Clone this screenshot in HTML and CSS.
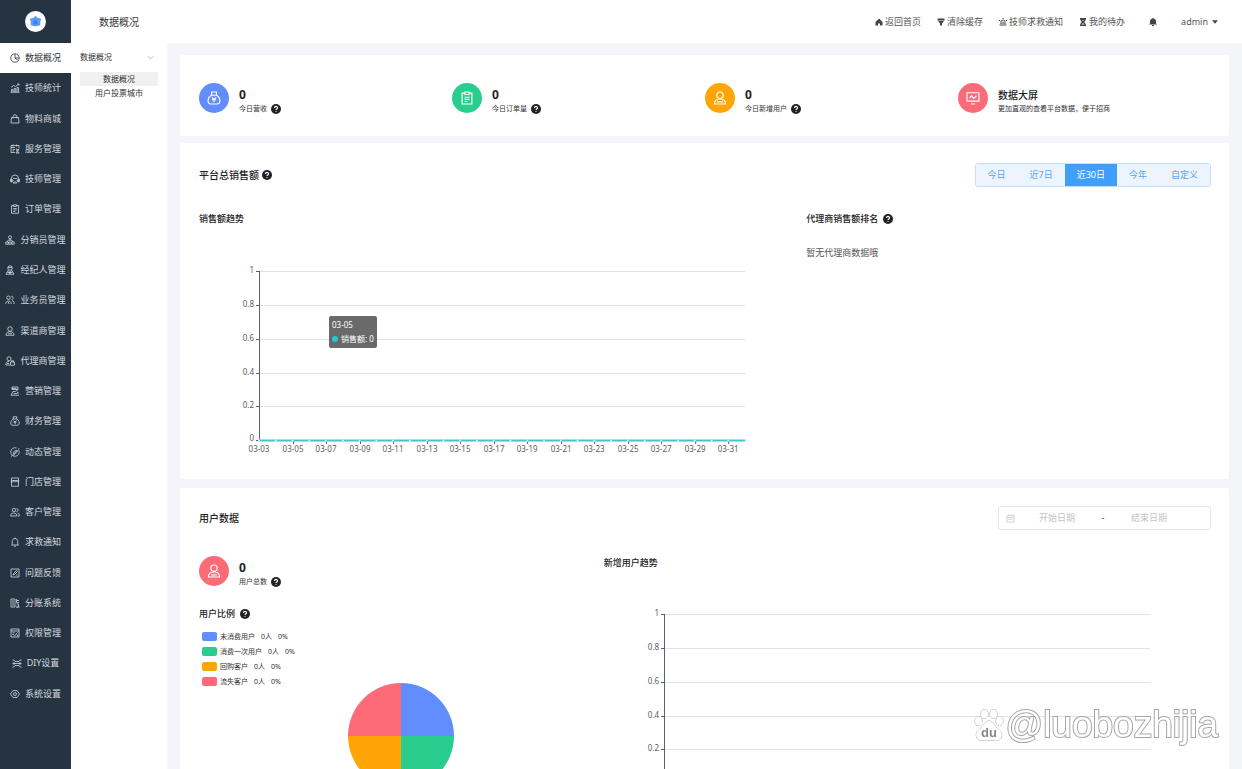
FILE: index.html
```html
<!DOCTYPE html>
<html lang="zh-CN">
<head>
<meta charset="utf-8">
<title>数据概况</title>
<link rel="stylesheet" href="styles.css">
</head>
<body>
<svg class="sprite" aria-hidden="true">
  <symbol id="i-pie" viewBox="0 0 20 20"><circle cx="10" cy="10" r="8.5"/><path d="M10 2v8.500l5 3M10 10h8"/></symbol>
  <symbol id="i-stats" viewBox="0 0 20 20"><path d="M1 18.500h18M3 18v-5h3v5M8.500 18v-7h3v7M14 18V9h3v9M2 9l5-4 4 2 7-5M14.500 2H18v3"/></symbol>
  <symbol id="i-bag" viewBox="0 0 20 20"><path d="M3 7h14l1 11H2zM6.500 9V5a3.500 3.500 0 0 1 7 0v4"/></symbol>
  <symbol id="i-service" viewBox="0 0 20 20"><path d="M18 8V3H2v14h8M2 7h8M5 11h5M5 14h3M6 1v4M13 1v4M12 12h6M13 9l4 9M18 9l-6 9h7"/></symbol>
  <symbol id="i-head" viewBox="0 0 20 20"><path d="M3 17V9a7 7 0 0 1 14 0v8M3 10H1v5h4v-4M17 10h2v5h-4v-4M6 9h8M7 12v1M13 12v1M6 18c1-3 7-3 8 0z"/></symbol>
  <symbol id="i-clip" viewBox="0 0 20 20"><path d="M7 3H3v15.500h14V3h-4M7 1.500h6V5H7zM6.500 9h7M6.500 12h7M6.500 15h4"/></symbol>
  <symbol id="i-tree" viewBox="0 0 20 20"><circle cx="10" cy="4.500" r="3"/><path d="M10 8v4M4 14l3-4h6l3 4M1.500 14h5v4.500h-5zM7.500 14h5v4.500h-5zM13.500 14h5v4.500h-5z"/></symbol>
  <symbol id="i-agent" viewBox="0 0 20 20"><circle cx="10" cy="6" r="4.500"/><path d="M6 5h8M7 10l-5 8.500h16L13 10M8 12l2 6 2-6M5 15h10"/></symbol>
  <symbol id="i-pair" viewBox="0 0 20 20"><circle cx="7" cy="5.500" r="3.500"/><path d="M1.500 18c0-8 11-8 11 0M12 2.500c5-1 6 6 1 6.500M14 11c4 1 4 4 4.500 7M6 13l2 5"/></symbol>
  <symbol id="i-user" viewBox="0 0 20 20"><circle cx="10" cy="6" r="4.500"/><path d="M2 18.500c0-4 3-7 6-7h4c3 0 6 3 6 7zM6 15.500h8"/></symbol>
  <symbol id="i-lockuser" viewBox="0 0 20 20"><circle cx="8" cy="5.500" r="4"/><path d="M10 18H1.500c0-4 2-7 6.500-7M11 12h8v6.500h-8zM13 12V9.500h4V12M4 15h4"/></symbol>
  <symbol id="i-market" viewBox="0 0 20 20"><path d="M4 2h12v5H4zM16 7l-5 4h-5l-4 7.500h16M7 15h8M4 5h9M14 12l4 3"/></symbol>
  <symbol id="i-money" viewBox="0 0 20 20"><path d="M6.500 1.500h7V6h-7zM6.500 6C3 8 1.500 11 1.500 14c0 3 1.500 4.500 4 4.500h9c2.500 0 4-1.500 4-4.500 0-3-1.500-6-5-8M7 9l3 3 3-3M10 12v4M7 12.500h6"/></symbol>
  <symbol id="i-compass" viewBox="0 0 20 20"><path d="M18 7a8.500 8.500 0 1 1-5-5M2 18.500c3 0 14-9 16-16M13.500 6.500l-2 5-5 2 2-5z"/></symbol>
  <symbol id="i-shop" viewBox="0 0 20 20"><path d="M3 2h14v5H3zM3 7v11.500h14V7M2 7c0 4 5 4 5.500 0 0 4 5 4 5 0 0 4 5.500 4 5.500 0"/></symbol>
  <symbol id="i-users" viewBox="0 0 20 20"><circle cx="8" cy="6" r="3.500"/><path d="M1.500 18v-2c0-5 12-5 12 0v2zM13 3c4 0 4 6 0 6M15 12c3 0 3.500 2 3.500 6H16"/></symbol>
  <symbol id="i-bell" viewBox="0 0 20 20"><path d="M4.500 15V9c0-8 11-8 11 0v6l1.500 1H3zM8 18.500h4M10 3V1"/></symbol>
  <symbol id="i-edit" viewBox="0 0 20 20"><path d="M2 2h16v16H2zM6 14l1-3 6-6 2 2-6 6zM12 14h3"/></symbol>
  <symbol id="i-split" viewBox="0 0 20 20"><path d="M2 2h8v16H2zM4 6h4M4 10h4M4 14h4M13 2v7h5M14 5h4M13 12h4v6h-4M12 18h7"/></symbol>
  <symbol id="i-perm" viewBox="0 0 20 20"><path d="M2 2h16v16H2zM2 6h16M5 9.500h4M5 13h3M8 17l7-8M14 13l2 4"/></symbol>
  <symbol id="i-diy" viewBox="0 0 20 20"><path d="M1 4h3l2 3h8l2-3h3M1 11h18M4 8v6M16 8v6M1 18h3l2-3h8l2 3h3"/></symbol>
  <symbol id="i-gear" viewBox="0 0 20 20"><path d="M6 3h8l5 7-5 7H6l-5-7z"/><circle cx="10" cy="10" r="3"/></symbol>
  <symbol id="i-screen" viewBox="0 0 20 20"><path d="M1.500 2.500h17v12h-17zM7 18.500h6M5 10l3-3 3 3.500L15 7"/></symbol>
  <symbol id="i-cal" viewBox="0 0 20 20"><path d="M2 3h16v15H2zM2 8h16M6 1v4M14 1v4M6 12h8"/></symbol>
  <symbol id="i-down" viewBox="0 0 20 20"><path d="M2 6l8 8 8-8"/></symbol>
  <symbol id="i-help" viewBox="0 0 20 20"><circle class="help-disc" cx="10" cy="10" r="10"/><path class="help-mark" d="M7 8c0-4.500 6.500-4 6 0-.3 2-3 2-3 4M10 14.500v1.500"/></symbol>
</svg>

<div class="app">
  <aside class="sidebar">
    <div class="brand">
      <svg class="logo" viewBox="0 0 22 22" role="img" aria-label="首页"><circle cx="11" cy="11" r="11" fill="#fff"/><path d="M11 5l2 2 4 1-1 3 0 4-4 1h-2l-4-1 0-4-1-3 4-1z" fill="#5b9cf5"/><path d="M9 10h4v4H9z" fill="#3b7de8"/></svg>
    </div>
    <nav class="menu">
      <a class="menu-item active" href="#"><svg class="icon"><use href="#i-pie"/></svg>数据概况</a>
      <a class="menu-item" href="#"><svg class="icon"><use href="#i-stats"/></svg>技师统计</a>
      <a class="menu-item" href="#"><svg class="icon"><use href="#i-bag"/></svg>物料商城</a>
      <a class="menu-item" href="#"><svg class="icon"><use href="#i-service"/></svg>服务管理</a>
      <a class="menu-item" href="#"><svg class="icon"><use href="#i-head"/></svg>技师管理</a>
      <a class="menu-item" href="#"><svg class="icon"><use href="#i-clip"/></svg>订单管理</a>
      <a class="menu-item" href="#"><svg class="icon"><use href="#i-tree"/></svg>分销员管理</a>
      <a class="menu-item" href="#"><svg class="icon"><use href="#i-agent"/></svg>经纪人管理</a>
      <a class="menu-item" href="#"><svg class="icon"><use href="#i-pair"/></svg>业务员管理</a>
      <a class="menu-item" href="#"><svg class="icon"><use href="#i-user"/></svg>渠道商管理</a>
      <a class="menu-item" href="#"><svg class="icon"><use href="#i-lockuser"/></svg>代理商管理</a>
      <a class="menu-item" href="#"><svg class="icon"><use href="#i-market"/></svg>营销管理</a>
      <a class="menu-item" href="#"><svg class="icon"><use href="#i-money"/></svg>财务管理</a>
      <a class="menu-item" href="#"><svg class="icon"><use href="#i-compass"/></svg>动态管理</a>
      <a class="menu-item" href="#"><svg class="icon"><use href="#i-shop"/></svg>门店管理</a>
      <a class="menu-item" href="#"><svg class="icon"><use href="#i-users"/></svg>客户管理</a>
      <a class="menu-item" href="#"><svg class="icon"><use href="#i-bell"/></svg>求救通知</a>
      <a class="menu-item" href="#"><svg class="icon"><use href="#i-edit"/></svg>问题反馈</a>
      <a class="menu-item" href="#"><svg class="icon"><use href="#i-split"/></svg>分账系统</a>
      <a class="menu-item" href="#"><svg class="icon"><use href="#i-perm"/></svg>权限管理</a>
      <a class="menu-item" href="#"><svg class="icon"><use href="#i-diy"/></svg>DIY设置</a>
      <a class="menu-item" href="#"><svg class="icon"><use href="#i-gear"/></svg>系统设置</a>
    </nav>
  </aside>

  <div class="page">
    <header class="topbar">
      <h1 class="page-title">数据概况</h1>
      <nav class="top-links">
        <a class="top-link" href="#"><svg class="glyph" viewBox="0 0 16 16"><path d="M8 1l7 7v7h-5v-4H6v4H1V8z"/></svg>返回首页</a>
        <a class="top-link" href="#"><svg class="glyph" viewBox="0 0 16 16"><path d="M1 1h14v4H1zM2 6h12l-4 5v4H6v-4z"/></svg>清除缓存</a>
        <a class="top-link" href="#"><svg class="glyph" viewBox="0 0 16 16"><path fill-rule="evenodd" d="M1 13h14v2H1zM3 12V7c0-5 10-5 10 0v5zM5 7v4h6V7c0-3-6-3-6 0zM7 7h2v3H7zM0 4h2v2H0zM14 4h2v2h-2zM7 0h2v2H7z"/></svg>技师求救通知</a>
        <a class="top-link" href="#"><svg class="glyph" viewBox="0 0 16 16"><path fill-rule="evenodd" d="M2 0h12v3h-1c0 3-1 4-3 5 2 1 3 2 3 5h1v3H2v-3h1c0-3 1-4 3-5-2-1-3-2-3-5H2zM6 4l2 2 2-2zM8 10l-3 3h6z"/></svg>我的待办</a>
      </nav>
      <button class="plain bell" type="button" aria-label="通知"><svg class="glyph" viewBox="0 0 16 16"><path d="M7 0h2v1c4 1 5 3 5 6v4l2 2H0l2-2V7c0-3 1-5 5-6zM6 14h4v2H6z"/></svg></button>
      <button class="plain account" type="button">admin<svg class="caret" viewBox="0 0 10 6"><path d="M0 0h10L5 6z"/></svg></button>
    </header>

    <div class="body">
      <aside class="submenu">
        <button class="plain submenu-head" type="button">数据概况<svg class="chevron"><use href="#i-down"/></svg></button>
        <a class="submenu-item active" href="#">数据概况</a>
        <a class="submenu-item" href="#">用户投票城市</a>
      </aside>

      <main class="content">
        <section class="card stats">
          <div class="stat"><span class="disc blue"><svg class="icon"><use href="#i-money"/></svg></span><div class="stat-text"><div class="num">0</div><div class="cap">今日营收<svg class="help"><use href="#i-help"/></svg></div></div></div>
          <div class="stat"><span class="disc green"><svg class="icon"><use href="#i-clip"/></svg></span><div class="stat-text"><div class="num">0</div><div class="cap">今日订单量<svg class="help"><use href="#i-help"/></svg></div></div></div>
          <div class="stat"><span class="disc orange"><svg class="icon"><use href="#i-user"/></svg></span><div class="stat-text"><div class="num">0</div><div class="cap">今日新增用户<svg class="help"><use href="#i-help"/></svg></div></div></div>
          <div class="stat"><span class="disc red"><svg class="icon"><use href="#i-screen"/></svg></span><div class="stat-text"><div class="num word">数据大屏</div><div class="cap">更加直观的查看平台数据，便于招商</div></div></div>
        </section>

        <section class="card sales">
          <div class="card-head">
            <h2 class="title">平台总销售额<svg class="help"><use href="#i-help"/></svg></h2>
            <div class="range">
              <button type="button">今日</button><button type="button">近7日</button><button class="on" type="button">近30日</button><button type="button">今年</button><button type="button">自定义</button>
            </div>
          </div>
          <div class="sales-grid">
            <div>
              <h3 class="subtitle">销售额趋势</h3>
              <div class="chart-box">
                <svg class="chart" viewBox="0 0 607 220" role="img" aria-label="销售额趋势">
                  <path class="rule" d="M61 30.500H546M61 64.500H546M61 98.500H546M61 132.500H546M61 165.500H546"/>
                  <path class="axis" d="M60.500 30V200M57 30.500h4M57 64.500h4M57 98.500h4M57 132.500h4M57 165.500h4M57 199.500h4"/>
                  <path class="axis" d="M94.500 200v3M127.500 200v3M161.500 200v3M194.500 200v3M228.500 200v3M261.500 200v3M295.500 200v3M328.500 200v3M362.500 200v3M395.500 200v3M429.500 200v3M462.500 200v3M496.500 200v3M529.500 200v3"/>
                  <path class="series" d="M60 199.500H546"/>
                  <path class="dots" d="M60 199.500H546"/>
                  <g class="ylab"><text x="55" y="32">1</text><text x="55" y="66">0.8</text><text x="55" y="100">0.6</text><text x="55" y="134">0.4</text><text x="55" y="167">0.2</text><text x="55" y="200">0</text></g>
                  <g class="xlab"><text x="60" y="211">03-03</text><text x="94" y="211">03-05</text><text x="127" y="211">03-07</text><text x="161" y="211">03-09</text><text x="194" y="211">03-11</text><text x="228" y="211">03-13</text><text x="261" y="211">03-15</text><text x="295" y="211">03-17</text><text x="328" y="211">03-19</text><text x="362" y="211">03-21</text><text x="395" y="211">03-23</text><text x="429" y="211">03-25</text><text x="462" y="211">03-27</text><text x="496" y="211">03-29</text><text x="529" y="211">03-31</text></g>
                </svg>
                <div class="tip"><div>03-05</div><div class="tip-row"><span class="tip-dot"></span>销售额: 0</div></div>
              </div>
            </div>
            <div>
              <h3 class="subtitle">代理商销售额排名<svg class="help"><use href="#i-help"/></svg></h3>
              <p class="empty">暂无代理商数据哦</p>
            </div>
          </div>
        </section>

        <section class="card users">
          <div class="card-head">
            <h2 class="title">用户数据</h2>
            <div class="dates">
              <svg class="icon"><use href="#i-cal"/></svg>
              <input type="text" placeholder="开始日期" aria-label="开始日期"><span class="dash">-</span><input type="text" placeholder="结束日期" aria-label="结束日期">
            </div>
          </div>
          <div class="users-grid">
            <div>
              <div class="stat"><span class="disc red"><svg class="icon"><use href="#i-user"/></svg></span><div class="stat-text"><div class="num">0</div><div class="cap">用户总数<svg class="help"><use href="#i-help"/></svg></div></div></div>
              <h3 class="subtitle ratio">用户比例<svg class="help"><use href="#i-help"/></svg></h3>
              <ul class="legend">
                <li><span class="swatch blue"></span><span>未消费用户</span><span>0人</span><span>0%</span></li>
                <li><span class="swatch green"></span><span>消费一次用户</span><span>0人</span><span>0%</span></li>
                <li><span class="swatch orange"></span><span>回购客户</span><span>0人</span><span>0%</span></li>
                <li><span class="swatch red"></span><span>流失客户</span><span>0人</span><span>0%</span></li>
              </ul>
              <svg class="pie" viewBox="0 0 106 106" role="img" aria-label="用户比例"><path fill="#618dff" d="M53 53V0a53 53 0 0 1 53 53z"/><path fill="#29ce8e" d="M53 53h53a53 53 0 0 1-53 53z"/><path fill="#ffa505" d="M53 53v53A53 53 0 0 1 0 53z"/><path fill="#fd6b78" d="M53 53H0A53 53 0 0 1 53 0z"/></svg>
            </div>
            <div>
              <h3 class="subtitle trend">新增用户趋势</h3>
              <svg class="chart" viewBox="0 0 607 220" role="img" aria-label="新增用户趋势">
                <path class="rule" d="M61 30.500H546M61 64.500H546M61 98.500H546M61 132.500H546M61 165.500H546"/>
                <path class="axis" d="M60.500 30V200H546M57 30.500h4M57 64.500h4M57 98.500h4M57 132.500h4M57 165.500h4"/>
                <g class="ylab"><text x="55" y="32">1</text><text x="55" y="66">0.8</text><text x="55" y="100">0.6</text><text x="55" y="134">0.4</text><text x="55" y="167">0.2</text></g>
              </svg>
            </div>
          </div>
        </section>
      </main>
    </div>
  </div>
</div>

<div class="watermark">
  <svg class="paw" viewBox="0 0 30 34"><g fill="#fff" stroke="#a6a6a6"><ellipse cx="4.500" cy="13" rx="3.500" ry="4.500"/><ellipse cx="10.500" cy="6" rx="3.500" ry="4.500"/><ellipse cx="19.500" cy="6" rx="3.500" ry="4.500"/><ellipse cx="25.500" cy="13" rx="3.500" ry="4.500"/><path d="M15 13c4 0 5 4 8 7 4 3 6 6 4 10s-7 2-12 2-10 2-12-2 0-7 4-10c3-3 4-7 8-7z"/></g><text class="paw-text" x="15" y="29">du</text></svg>
  <span>@luobozhijia</span>
</div>
</body>
</html>
```

FILE: styles.css
```css
* { box-sizing: border-box; }

body {
  margin: 0;
  background: #f4f5f8;
  color: #303133;
  font: 9px/14px "Noto Sans", "Noto Sans CJK SC", sans-serif;
}

h1, h2, h3, p, ul { margin: 0; padding: 0; }
a { color: inherit; text-decoration: none; }
svg { display: block; flex: none; }
.sprite { position: absolute; width: 0; height: 0; }

.icon, .chevron {
  width: 10px;
  height: 10px;
  fill: none;
  stroke: currentColor;
  stroke-width: 1.6;
}

.help { width: 10px; height: 10px; }
.help-disc { fill: #222; }
.help-mark { fill: none; stroke: #fff; stroke-width: 2.4; }

.plain {
  display: flex;
  align-items: center;
  padding: 0;
  border: 0;
  background: none;
  color: inherit;
  font: inherit;
}

.app { display: flex; height: 100vh; overflow: hidden; }

/* Primary navigation */
.sidebar {
  display: flex;
  flex: none;
  flex-direction: column;
  width: 71px;
  background: #263442;
  color: #d3d9df;
}
.brand {
  display: flex;
  flex: none;
  align-items: center;
  justify-content: center;
  height: 43px;
}
.logo { width: 21px; height: 21px; }
.menu {
  display: flex;
  flex: 1;
  flex-direction: column;
  padding-bottom: 60px;
}
.menu-item {
  display: flex;
  flex: 1;
  align-items: center;
  justify-content: center;
  gap: 5px;
  white-space: nowrap;
}
.menu-item.active { background: #fff; color: #303133; }

/* Top bar */
.page { display: flex; flex: 1; flex-direction: column; min-width: 0; }
.topbar {
  display: flex;
  flex: none;
  align-items: center;
  height: 43px;
  padding-right: 24px;
  background: #fff;
  color: #555;
}
.page-title {
  width: 96px;
  color: #333;
  font-size: 10px;
  font-weight: 400;
  text-align: center;
}
.top-links { display: flex; gap: 16px; margin-left: auto; }
.top-link { display: flex; align-items: center; gap: 2px; }
.glyph { width: 8px; height: 8px; fill: #444; }
.bell { margin: 0 24px; }
.account { gap: 4px; }
.caret { width: 6px; height: 4px; fill: #444; }

/* Secondary navigation */
.body { display: flex; flex: 1; min-height: 0; }
.submenu {
  flex: none;
  width: 96px;
  padding: 7px 9px;
  background: #fff;
  font-size: 8px;
}
.submenu-head { justify-content: space-between; width: 100%; height: 14px; margin-bottom: 8px; padding-right: 4px; }
.chevron { width: 7px; height: 7px; color: #888; }
.submenu-item { display: block; text-align: center; }
.submenu-item.active { background: #f0f0f0; }

/* Cards */
.content {
  flex: 1;
  min-width: 0;
  padding: 12px 13px;
  overflow: auto;
  scrollbar-width: none;
}
.card { padding: 0 18px 0 19px; border-radius: 2px; background: #fff; }
.stats {
  display: grid;
  grid-template-columns: repeat(4, 1fr);
  margin-bottom: 7px;
  padding-top: 28px;
  padding-bottom: 20px;
}
.stat { display: flex; gap: 10px; }
.stat-text { padding-top: 5px; }
.disc {
  display: flex;
  align-items: center;
  justify-content: center;
  width: 30px;
  height: 30px;
  border-radius: 50%;
  color: #fff;
}
.disc .icon { width: 14px; height: 14px; }
.blue { background: #618dff; }
.green { background: #29ce8e; }
.orange { background: #ffa505; }
.red { background: #fd6b78; }
.num { color: #222; font-size: 12px; font-weight: 700; }
.num.word { font-size: 10px; font-weight: 500; }
.cap { display: flex; align-items: center; gap: 4px; font-size: 7px; }

.card-head { display: flex; align-items: center; justify-content: space-between; height: 24px; }
.title, .subtitle { display: flex; align-items: center; gap: 3px; color: #222; font-size: 10px; font-weight: 500; }
.subtitle { gap: 5px; font-size: 9px; }

.sales { margin-bottom: 9px; padding-top: 20px; padding-bottom: 18px; }
.range {
  display: flex;
  border: 1px solid #c3dffb;
  border-radius: 3px;
  overflow: hidden;
}
.range button {
  height: 22px;
  padding: 0 12px;
  border: 0;
  background: #ecf5ff;
  color: #5aa5f0;
  font: inherit;
}
.range .on { background: #409eff; color: #fff; }
.sales-grid { display: grid; grid-template-columns: 3fr 2fr; padding-top: 25px; }
.empty { margin-top: 20px; color: #555; }

/* Charts */
.chart-box { position: relative; margin-top: 15px; }
.chart { width: 100%; font-size: 8px; }
.rule { stroke: #e0e3e6; }
.axis { fill: none; stroke: #5c6066; }
.series { stroke: #3fc4d2; stroke-width: 2; }
.dots { stroke: #dff8fa; stroke-width: 2; stroke-linecap: round; stroke-dasharray: 0 16.76; }
.ylab, .xlab { fill: #5c6066; }
.ylab { text-anchor: end; }
.xlab { text-anchor: middle; }
.tip {
  position: absolute;
  top: 75px;
  left: 130px;
  padding: 2px 3px;
  border-radius: 2px;
  background: rgba(80, 80, 80, 0.85);
  color: #fff;
  font-size: 8px;
  white-space: nowrap;
}
.tip-row { display: flex; align-items: center; gap: 3px; }
.tip-dot { width: 6px; height: 6px; border-radius: 50%; background: #27c5dc; }

/* User data */
.users { padding-top: 18px; }
.dates {
  display: flex;
  align-items: center;
  height: 24px;
  padding: 0 19px 0 7px;
  border: 1px solid #e4e7ed;
  border-radius: 3px;
}
.dates .icon { width: 9px; height: 9px; color: #c0c4cc; }
.dates input {
  width: 84px;
  padding: 0;
  border: 0;
  background: none;
  font: inherit;
  text-align: center;
}
.dates input::placeholder { color: #c0c4cc; }
.dash { width: 8px; text-align: center; }
.users-grid { display: grid; grid-template-columns: 2fr 3fr; padding-top: 26px; }
.ratio { margin-top: 18px; }
.legend { margin-top: 8px; padding-left: 3px; list-style: none; font-size: 7px; }
.legend li { display: flex; align-items: center; gap: 6px; height: 15px; }
.swatch { width: 15px; height: 9px; margin-right: -3px; border-radius: 2px; }
.pie { width: 106px; margin: -6px auto 0; }
.trend + .chart { margin-top: 14px; }

/* Watermark laid over the page corner */
.watermark {
  position: fixed;
  right: 24px;
  bottom: 22px;
  display: flex;
  align-items: center;
  gap: 2px;
  color: #fff;
  font: 37px/44px "Liberation Sans", sans-serif;
  -webkit-text-stroke: 2px #a6a6a6;
  paint-order: stroke fill;
}
.paw { width: 30px; height: 34px; }
.paw-text {
  fill: #888;
  font: 700 13px "Liberation Sans", sans-serif;
  text-anchor: middle;
  -webkit-text-stroke: 0;
}
```
